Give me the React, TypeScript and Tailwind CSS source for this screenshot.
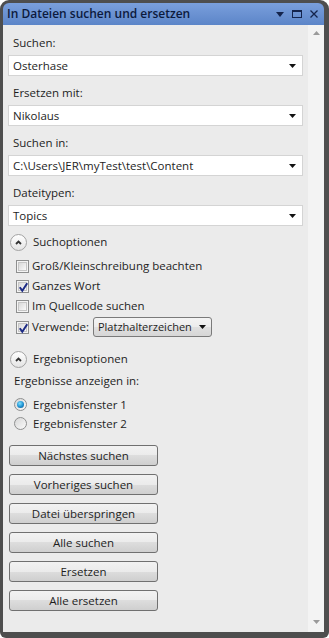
import React from 'react';

const font = { fontFamily: '"Open Sans", "Liberation Sans", sans-serif' };

const Arrow: React.FC<{ className?: string }> = ({ className }) => (
  <svg width="7" height="4" viewBox="0 0 7 4" className={className}>
    <polygon points="0,0 7,0 3.5,4" fill="currentColor" />
  </svg>
);

const Label: React.FC<{ text: string }> = ({ text }) => (
  <div className="h-[29px] flex items-end pb-[4px] pl-[5px] text-[11.5px] leading-[16px] text-[#1e1e1e]">{text}</div>
);

const Combo: React.FC<{ value: string }> = ({ value }) => (
  <div className="h-[21px] bg-white border border-[#d4d4d4] flex items-center justify-between pl-[4px] pr-[6px] text-[11.5px] text-[#1e1e1e]">
    <span>{value}</span>
    <Arrow className="text-[#111]" />
  </div>
);

const ExpanderHeader: React.FC<{ text: string }> = ({ text }) => (
  <div className="h-[20px] flex items-center pl-[2px] text-[11.5px] text-[#1e1e1e]">
    <div className="w-[17px] h-[17px] rounded-full border border-[#a3a3a3] bg-gradient-to-b from-[#ffffff] to-[#e4e4e4] flex items-center justify-center">
      <svg width="7" height="5" viewBox="0 0 7 5">
        <polyline points="1,4 3.5,1.5 6,4" fill="none" stroke="#333" strokeWidth="1.8" />
      </svg>
    </div>
    <span className="ml-[6px]">{text}</span>
  </div>
);

const Checkbox: React.FC<{ checked?: boolean }> = ({ checked }) => (
  <div className="w-[13px] h-[13px] border border-[#8e8f8f] bg-[#f4f4f4] p-[1px] shrink-0">
    <div className="w-full h-full border border-[#c6c6c6] bg-gradient-to-br from-[#d9d9d9] to-[#fafafa] relative">
      {checked && (
        <svg width="11" height="11" viewBox="0 0 11 11" className="absolute -left-[1px] -top-[1px]">
          <path d="M1.8 5.2 L4.3 8.8 L9.2 1.2" fill="none" stroke="#1d2b85" strokeWidth="2" />
        </svg>
      )}
    </div>
  </div>
);

const CheckRow: React.FC<{ text: string; checked?: boolean; children?: React.ReactNode; tall?: boolean }> = ({ text, checked, children, tall }) => (
  <div className={`${tall ? 'h-[22px]' : 'h-[20px]'} flex items-center pl-[8px] text-[11.5px] text-[#1e1e1e]`}>
    <Checkbox checked={checked} />
    <span className="ml-[3px]">{text}</span>
    {children}
  </div>
);

const Radio: React.FC<{ text: string; checked?: boolean }> = ({ text, checked }) => (
  <div className="h-[19px] flex items-center pl-[6px] text-[11.5px] text-[#1e1e1e]">
    <div className="w-[13px] h-[13px] rounded-full border border-[#8e8f8f] bg-gradient-to-br from-[#d6d6d6] to-[#fbfbfb] flex items-center justify-center">
      {checked && (
        <div className="w-[7px] h-[7px] rounded-full bg-[radial-gradient(circle_at_40%_35%,#7fe0ff,#1b8fd0_55%,#16507e)]" />
      )}
    </div>
    <span className="ml-[6px]">{text}</span>
  </div>
);

const Button: React.FC<{ text: string }> = ({ text }) => (
  <div className="ml-[1px] w-[149px] h-[21px] rounded-[3px] border border-[#707070] bg-[linear-gradient(to_bottom,#f2f2f2_0%,#ebebeb_50%,#dddddd_50%,#cfcfcf_100%)] flex items-center justify-center text-[11.5px] text-[#1e1e1e]">
    {text}
  </div>
);

export default function App() {
  const buttons = ['Nächstes suchen', 'Vorheriges suchen', 'Datei überspringen', 'Alle suchen', 'Ersetzen', 'Alle ersetzen'];

  return (
    <div style={font} className="w-[329px] h-[638px] bg-[#4e4e4e] rounded-t-[9px] rounded-b-[6px] pl-[3px] pr-[5px] pt-[3px] pb-[6px] flex flex-col">
      {/* Title bar */}
      <div className="h-[22px] shrink-0 rounded-t-[6px] bg-gradient-to-b from-[#7a9fdc] to-[#5c85c8] flex items-center pl-[4px] pr-[6px]">
        <span className="text-[12px] font-semibold text-[#0c1a3d]">In Dateien suchen und ersetzen</span>
        <div className="ml-auto flex items-center gap-[8px] text-[#14244d]">
          <svg width="8" height="5" viewBox="0 0 8 5"><polygon points="0,0 8,0 4,5" fill="currentColor" /></svg>
          <svg width="10" height="8" viewBox="0 0 10 8">
            <rect x="0.5" y="0.5" width="9" height="7" fill="none" stroke="currentColor" />
            <rect x="0" y="0" width="10" height="2" fill="currentColor" />
          </svg>
          <svg width="8" height="8" viewBox="0 0 8 8">
            <path d="M0.5 0.5 L7.5 7.5 M7.5 0.5 L0.5 7.5" stroke="currentColor" strokeWidth="1.3" />
          </svg>
        </div>
      </div>

      {/* Body */}
      <div className="flex-1 flex min-h-0">
        <div className="flex-1 bg-[#ebebeb] px-[5px] pt-[1px] flex flex-col">
          <Label text="Suchen:" />
          <Combo value="Osterhase" />
          <Label text="Ersetzen mit:" />
          <Combo value="Nikolaus" />
          <Label text="Suchen in:" />
          <Combo value="C:\Users\JER\myTest\test\Content" />
          <Label text="Dateitypen:" />
          <Combo value="Topics" />

          <div className="mt-[6px]">
            <ExpanderHeader text="Suchoptionen" />
          </div>
          <div className="mt-[4px]">
            <CheckRow text="Groß/Kleinschreibung beachten" />
            <CheckRow text="Ganzes Wort" checked />
            <CheckRow text="Im Quellcode suchen" />
            <CheckRow text="Verwende:" checked tall>
              <div className="ml-[4px] w-[119px] h-[20px] rounded-[3px] border border-[#7a7a7a] bg-[linear-gradient(to_bottom,#f4f4f4_0%,#ececec_50%,#e0e0e0_50%,#d6d6d6_100%)] flex items-center justify-between pl-[4px] pr-[5px] whitespace-nowrap text-[11px]">
                <span>Platzhalterzeichen</span>
                <Arrow className="text-[#111] shrink-0" />
              </div>
            </CheckRow>
          </div>

          <div className="mt-[11px]">
            <ExpanderHeader text="Ergebnisoptionen" />
          </div>
          <div className="mt-[2px] h-[20px] flex items-center pl-[6px] text-[11.5px] text-[#1e1e1e]">Ergebnisse anzeigen in:</div>
          <div className="mt-[4px]">
            <Radio text="Ergebnisfenster 1" checked />
            <Radio text="Ergebnisfenster 2" />
          </div>

          <div className="mt-[12px] flex flex-col gap-[8px]">
            {buttons.map((b) => (
              <Button key={b} text={b} />
            ))}
          </div>
        </div>

        {/* Scrollbar */}
        <div className="w-[16px] bg-[#f3f3f3] flex flex-col items-center justify-between pt-[6px] pb-[8px] text-[#9a9a9a]">
          <svg width="7" height="4" viewBox="0 0 7 4"><polygon points="0,4 7,4 3.5,0" fill="currentColor" /></svg>
          <svg width="7" height="4" viewBox="0 0 7 4"><polygon points="0,0 7,0 3.5,4" fill="currentColor" /></svg>
        </div>
      </div>
    </div>
  );
}
